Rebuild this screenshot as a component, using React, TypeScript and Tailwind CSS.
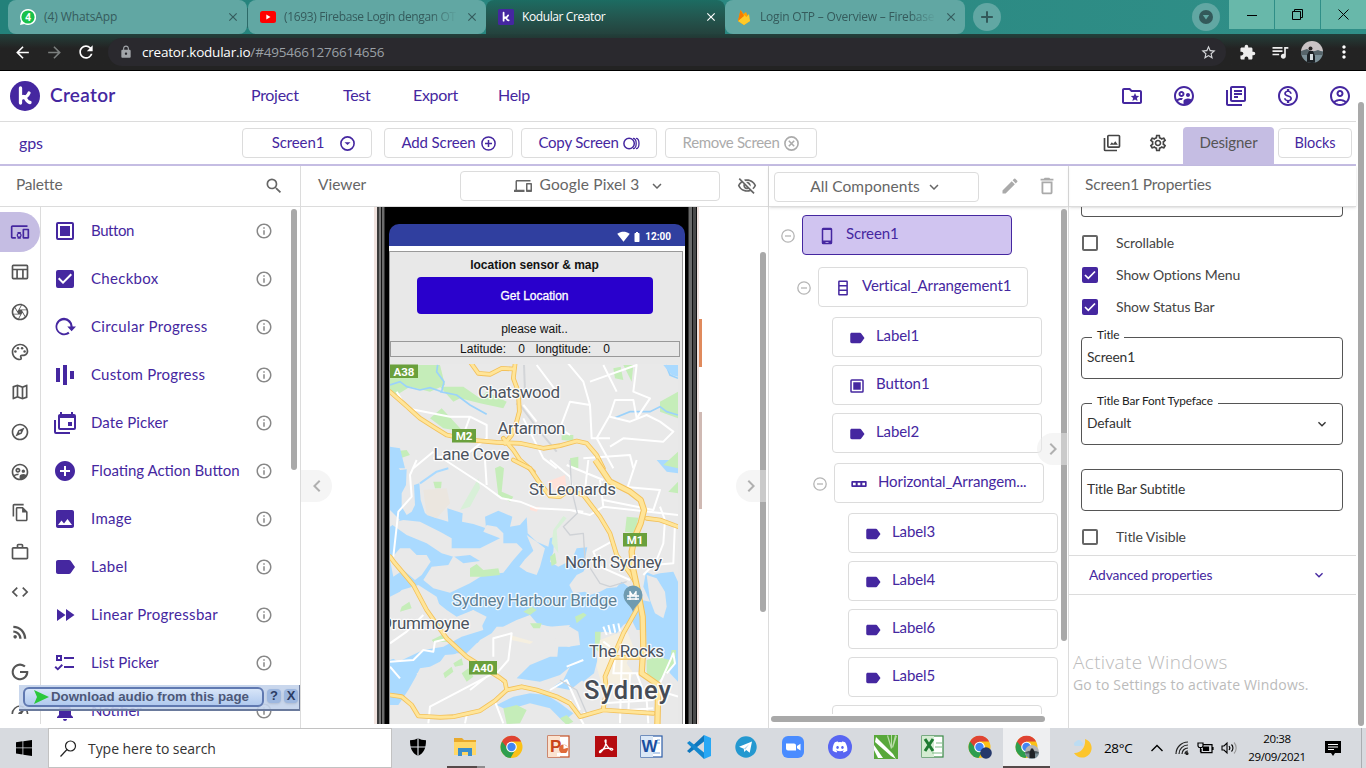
import React from "react";
import {
  MdAddCircle, MdArrowBack, MdArrowForward, MdCheckBox, MdChevronLeft, MdChevronRight, MdCode,
  MdDeleteOutline, MdEdit, MdExpandMore, MdExtension, MdFastForward, MdImage, MdLabel, MdLock, MdMoreVert,
  MdNotifications, MdOutlineAccountCircle, MdOutlineCamera, MdOutlineDevices, MdOutlineDevicesOther,
  MdOutlineExplore, MdOutlineFileCopy, MdOutlineFolderSpecial, MdOutlineInfo, MdOutlineLibraryBooks, MdOutlineMap,
  MdOutlineMonetizationOn, MdOutlinePalette, MdOutlineSettings, MdOutlineSupervisedUserCircle,
  MdOutlineVisibilityOff, MdQueueMusic, MdRefresh, MdRssFeed, MdSearch, MdSpeed, MdStarBorder, MdWorkOutline,
  MdClose, MdSignalWifi4Bar, MdBatteryFull,
} from "react-icons/md";
import { FaDiscord } from "react-icons/fa";

const JOST = "font-['Lato',sans-serif]";
const SEGOE = "font-['Open_Sans',sans-serif]";

function Svg({ w = 24, h, vb = "0 0 24 24", children, className = "" }: any) {
  return (
    <svg width={w} height={h ?? w} viewBox={vb} className={`shrink-0 ${className}`} fill="currentColor">
      {children}
    </svg>
  );
}

const ButtonIcon = ({ w }: any) => (
  <Svg w={w}><path fillRule="evenodd" d="M5 3h14a2 2 0 0 1 2 2v14a2 2 0 0 1-2 2H5a2 2 0 0 1-2-2V5a2 2 0 0 1 2-2zm0 2v14h14V5z" /><path d="M7 7h10v10H7z" /></Svg>
);
const CircularIcon = ({ w }: any) => (
  <Svg w={w}><path d="M11 2a9.500 9.500 0 1 0 6 17l-1.500-1.700A7.200 7.200 0 1 1 18 11.500h-3.500l4.700 5 4.800-5h-3.600A9.500 9.500 0 0 0 11 2z" /></Svg>
);
const CustomIcon = ({ w }: any) => (
  <Svg w={w}><path d="M3 5h4v14H3zM10 2h4v20h-4zM17 8h4v8h-4z" /></Svg>
);
const DateIcon = () => (
  <Svg w={24}><path fillRule="evenodd" d="M7 1h2v2h9V1h2v2h1a2 2 0 0 1 2 2v12a2 2 0 0 1-2 2H7a2 2 0 0 1-2-2V5c0-1.100.9-2 2-2zM7 7v10h14V7zM15 11h4v4h-4z" /><path d="M1 9h2v12h14v2H3a2 2 0 0 1-2-2z" /></Svg>
);
const ListPickIcon = () => (
  <Svg w={24}><path fillRule="evenodd" d="M3 4h6v6H3zm2 2v2h2V6zM11 6h10v2H11zM11 15h10v2H11zM8.600 13l1.400 1.400-5.200 5.200L1.500 16.500l1.400-1.400 1.900 1.800z" /></Svg>
);
const TableIcon = ({ w }: any) => (
  <Svg w={w}><path fillRule="evenodd" d="M4 3h16a2 2 0 0 1 2 2v14a2 2 0 0 1-2 2H4a2 2 0 0 1-2-2V5a2 2 0 0 1 2-2zm0 2v3h16V5zm0 5v9h3.500v-9zm5.500 0v9h5v-9zm7 0v9H20v-9z" /></Svg>
);
const PhoneIcon = () => (
  <Svg w={18}><path fillRule="evenodd" d="M7 1h10a2 2 0 0 1 2 2v18a2 2 0 0 1-2 2H7a2 2 0 0 1-2-2V3a2 2 0 0 1 2-2zm0 3v14h10V4zm3 16v1h4v-1z" /></Svg>
);
const VertIcon = () => (
  <Svg w={18}><path fillRule="evenodd" d="M7 2h10a1.500 1.500 0 0 1 1.500 1.500v17A1.500 1.500 0 0 1 17 22H7a1.500 1.500 0 0 1-1.500-1.500v-17A1.500 1.500 0 0 1 7 2zm.5 2v4h9V4zm0 6v4h9v-4zm0 6v4h9v-4z" /></Svg>
);
const HorizIcon = () => (
  <Svg w={16}><path fillRule="evenodd" d="M2 7.500h20a1.500 1.500 0 0 1 1.500 1.500v6a1.500 1.500 0 0 1-1.500 1.500H2A1.500 1.500 0 0 1 .5 15V9A1.500 1.500 0 0 1 2 7.500zm1 2.500v4h4v-4zm7 0v4h4v-4zm7 0v4h4v-4z" /></Svg>
);
const GalleryIcon = () => (
  <Svg w={20}><path fillRule="evenodd" d="M8 2h12a2 2 0 0 1 2 2v12a2 2 0 0 1-2 2H8a2 2 0 0 1-2-2V4a2 2 0 0 1 2-2zm0 2v12h12V4zM9.500 14l2.300-3 1.700 2 2.500-3 3 4z" /><path d="M2 6h2v14h14v2H4a2 2 0 0 1-2-2z" /></Svg>
);

function KLogo({ square = false, size }: any) {
  return (
    <svg width={size} height={size} viewBox="0 0 30 30" className="shrink-0">
      {square ? <rect width="30" height="30" rx="3" fill="#4527a0" /> : <circle cx="15" cy="15" r="15" fill="#4527a0" />}
      <path d="M10.500 7v15M12 17c4-.5 6-2.500 7-5M13.500 15.500c2.500.5 2.500 5.500 6.500 6" fill="none" stroke="#fff" strokeWidth="3.300" strokeLinecap="round" />
    </svg>
  );
}

function Tab({ icon, title, active, width, fade }: any) {
  return (
    <div className={`flex h-[34px] shrink-0 items-center pl-3 pr-[7px] ${width} ${active ? "rounded-t-lg bg-linear-to-b from-[#1c6c62] to-[#24423d] text-white" : "rounded-lg bg-[#61a7a3] text-[#355b5c]"}`}>
      {icon}
      <span className={`ml-2 flex-1 whitespace-nowrap text-[12px] ${fade ? "mask-r-from-85%" : ""}`}>{title}</span>
      <MdClose size={14} className="ml-2 shrink-0" />
    </div>
  );
}

function Browser() {
  return (
    <div className={`${SEGOE} shrink-0`}>
      <div className="flex h-[34px] bg-linear-to-r from-[#23817a] to-[#308f88] pl-2">
        <Tab width="w-[239px]" title={<span className="tracking-[-0.1px]">(4) WhatsApp</span>} icon={
          <svg width="16" height="16" viewBox="0 0 16 16" className="shrink-0"><path d="M8 0a8 8 0 1 1-3.700 15L0 16l1.100-4A8 8 0 0 1 8 0z" fill="#fff" /><circle cx="8" cy="8" r="6.600" fill="#19c14b" /><text x="8" y="11.500" fontSize="10" fontWeight="700" textAnchor="middle" fill="#fff">4</text></svg>} />
        <div className="mt-2 h-[20px] w-px bg-[#2c6a68]" />
        <Tab width="w-[238px]" fade title={<span className="tracking-[-0.35px]">(1693) Firebase Login dengan OT</span>} icon={
          <svg width="16" height="12" viewBox="0 0 16 12" className="shrink-0"><rect width="16" height="12" rx="2.500" fill="#f00" /><path d="M6.300 3.500v5L10.500 6z" fill="#fff" /></svg>} />
        <Tab width="w-[239px]" active title={<span className="tracking-[-0.4px]">Kodular Creator</span>} icon={<KLogo square size={16} />} />
        <Tab width="w-[240px]" fade title={<span className="ml-px tracking-[-0.2px]">Login OTP – Overview – Firebase</span>} icon={
          <svg width="14" height="16" viewBox="0 0 14 16" className="shrink-0"><path d="M1 12 3.500 1l3 4L9 3l4 9-6 4z" fill="#ffa000" /><path d="m1 12 6-6 2.500 2L12 5l1 7-6 4z" fill="#ffca28" /><path d="M1 12 3.500 1l3.500 6z" fill="#f57c00" /></svg>} />
        <div className="ml-[8px] mt-[3px] flex size-7 items-center justify-center rounded-full bg-[#61a7a3] text-[#33595a]">
          <Svg w={14}><path d="M10.300 2h3.400v8.300H22v3.400h-8.300V22h-3.400v-8.300H2v-3.400h8.300z" /></Svg>
        </div>
        <div className="ml-auto mr-[9px] mt-[3px] flex size-7 items-center justify-center rounded-full bg-[#61a7a3]">
          <svg width="14" height="14" viewBox="0 0 14 14"><circle cx="7" cy="7" r="7" fill="#33595a" /><path d="M3.800 5h6.400L7 9.500z" fill="#61a7a3" /></svg>
        </div>
        <div className="flex h-[29px] gap-px text-black">
          <div className="flex w-[45px] items-center justify-center bg-[#68b8aa]"><svg width="10" height="10"><path d="M0 5.500h10" stroke="#000" /></svg></div>
          <div className="flex w-[45px] items-center justify-center bg-[#68b8aa]"><svg width="11" height="11" fill="none" stroke="#000"><path d="M.5 2.500h8v8h-8zM2.500 2.500v-2h8v8h-2" /></svg></div>
          <div className="flex w-[45px] items-center justify-center bg-[#68b8aa]"><svg width="11" height="11" stroke="#000"><path d="m.5.5 10 10m0-10-10 10" /></svg></div>
        </div>
      </div>
      <div className="flex h-[37px] items-center border-b border-black bg-linear-to-b from-[#21403b] to-[#232323] to-40% text-white">
        <MdArrowBack size={19} className="ml-[13px]" />
        <MdArrowForward size={19} className="ml-[13px] text-[#7b7f7e]" />
        <MdRefresh size={20} className="ml-[12px]" />
        <div className="ml-[12px] flex h-7 w-[1118px] items-center rounded-full bg-[#2a292e] text-[13.500px]">
          <MdLock size={14} className="ml-[11px] text-[#a3a6aa]" />
          <span className="ml-[9px] tracking-[-0.22px]">creator.kodular.io<span className="tracking-[-0.18px] text-[#9aa0a6]">/#4954661276614656</span></span>
          <MdStarBorder size={17} className="ml-auto mr-[9px] text-[#d5d7da]" />
        </div>
        <MdExtension size={17} className="ml-[13px] text-[#eee]" />
        <MdQueueMusic size={20} className="ml-[14px] text-[#eee]" />
        <Avatar size={22} className="ml-[11px]" />
        <MdMoreVert size={20} className="ml-[11px]" />
      </div>
    </div>
  );
}

function Avatar({ size, className = "" }: any) {
  return (
    <svg width={size} height={size} viewBox="0 0 22 22" className={`shrink-0 rounded-full ${className}`}>
      <rect width="22" height="11" fill="#c9c2c4" />
      <rect y="10" width="22" height="12" fill="#7c9098" />
      <path d="M0 10l6-2 5 3 6-2 5 2v3H0z" fill="#56646a" />
      <circle cx="9.500" cy="7.500" r="2" fill="#241f20" /><path d="M6 22V14l2-4h4l2 5v7z" fill="#1d2226" /><path d="M9 13h3v6H9z" fill="#d6dde0" />
    </svg>
  );
}

const btn = "flex h-[30px] items-center justify-center rounded border border-[#dcdcdc]";

function Header() {
  return (
    <>
      <div className="flex h-[51px] shrink-0 items-center border-b border-[#dcdcdc] text-[#4527a0]">
        <div className="ml-[10px] flex w-[241px] items-center"><KLogo size={30} /><span className="ml-[10px] pb-[2px] text-[19px] font-semibold tracking-[0.3px]">Creator</span></div>
        <div className="flex items-center pb-[3px] text-[16px] tracking-[-0.3px]">
          <span className="w-[92px]">Project</span>
          <span className="w-[70px]">Test</span>
          <span className="w-[85px]">Export</span>
          <span>Help</span>
        </div>
        <div className="ml-auto mr-[4px] flex gap-[28px]">
          <MdOutlineFolderSpecial size={24} />
          <MdOutlineSupervisedUserCircle size={24} />
          <MdOutlineLibraryBooks size={24} />
          <MdOutlineMonetizationOn size={24} />
          <MdOutlineAccountCircle size={24} />
        </div>
      </div>
      <div className="flex h-[44px] shrink-0 items-center border-b-2 border-[#c5bde3] text-[15px] tracking-[-0.1px] text-[#4527a0]">
        <span className="ml-[19px] w-[223px] text-[16px]">gps</span>
        <div className={`${btn} w-[130px] pl-[13px]`}><span className="pb-[2px]">Screen1</span>
          <svg width="15" height="15" viewBox="0 0 15 15" className="ml-[16px]"><circle cx="7.500" cy="7.500" r="6.600" fill="none" stroke="currentColor" strokeWidth="1.600" /><path d="M4.500 6.300h6L7.500 9z" fill="currentColor" /></svg>
        </div>
        <div className={`${btn} ml-[12px] w-[129px] gap-[5px]`}><span className="pb-[2px]">Add Screen</span>
          <svg width="15" height="15" viewBox="0 0 15 15"><circle cx="7.500" cy="7.500" r="6.600" fill="none" stroke="currentColor" strokeWidth="1.500" /><path d="M7.500 4v7M4 7.500h7" stroke="currentColor" strokeWidth="1.500" /></svg>
        </div>
        <div className={`${btn} ml-[8px] w-[136px] gap-[4px]`}><span className="pb-[2px] tracking-[-0.2px]">Copy Screen</span>
          <svg width="17" height="13" viewBox="0 0 17 13" fill="none" stroke="currentColor" strokeWidth="1.500"><circle cx="6.100" cy="6.500" r="5.200" /><path d="M10 1.300c2 0 3.200 2.400 3.200 5.200S12 11.700 10 11.700M13 1.300c2 0 3 2.400 3 5.200s-1 5.200-3 5.200" strokeWidth="1.300" /></svg>
        </div>
        <div className={`${btn} ml-[8px] w-[152px] gap-[5px] text-[#ababab]`}><span className="pb-[2px] tracking-[-0.350px]">Remove Screen</span>
          <svg width="15" height="15" viewBox="0 0 15 15"><circle cx="7.500" cy="7.500" r="6.600" fill="none" stroke="currentColor" strokeWidth="1.600" /><path d="m4.800 4.800 5.400 5.400m0-5.400-5.400 5.400" stroke="currentColor" strokeWidth="1.600" /></svg>
        </div>
        <div className="ml-auto flex items-center pb-px text-[#444]"><GalleryIcon /><MdOutlineSettings size={20} className="ml-[26px]" /></div>
        <div className="ml-[15px] mt-[6px] flex h-[38px] w-[91px] items-center justify-center rounded-t bg-[#c5bde3] pb-[7px] text-[#555]">Designer</div>
        <div className={`${btn} ml-[4px] mr-[4px] w-[74px] text-[14.500px]`}>Blocks</div>
      </div>
    </>
  );
}

const palette: [any, string, string][] = [
  [<ButtonIcon w={24} />, "Button", "tracking-[-0.4px]"],
  [<MdCheckBox size={24} />, "Checkbox", "tracking-[0.3px]"],
  [<CircularIcon w={22} />, "Circular Progress", "tracking-[0.35px]"],
  [<CustomIcon w={24} />, "Custom Progress", "tracking-[0.200px]"],
  [<DateIcon />, "Date Picker", "tracking-[0.1px]"],
  [<MdAddCircle size={24} />, "Floating Action Button", ""],
  [<MdImage size={24} />, "Image", "tracking-[0.3px]"],
  [<MdLabel size={24} />, "Label", "tracking-[0.300px]"],
  [<MdFastForward size={24} />, "Linear Progressbar", "tracking-[0.300px]"],
  [<ListPickIcon />, "List Picker", "tracking-[0.05px]"],
  [<MdNotifications size={24} />, "Notifier", ""],
];

const GIcon = () => (
  <Svg w={20}><path d="M21.800 10.900H12v2.400h7.200c-.5 3.600-3.500 6.200-7.200 6.200a7.500 7.500 0 1 1 5-13.100l1.800-1.800A10 10 0 1 0 22 12c0-.4-.1-.8-.2-1.100z" /></Svg>
);

function PalettePanel() {
  const cats = [
    <TableIcon w={20} />, <MdOutlineCamera size={20} />, <MdOutlinePalette size={20} />, <MdOutlineMap size={20} />,
    <MdOutlineExplore size={20} />, <MdOutlineSupervisedUserCircle size={20} />, <MdOutlineFileCopy size={19} />,
    <MdWorkOutline size={20} />, <MdCode size={20} />, <MdRssFeed size={20} />, <GIcon />, <MdSpeed size={20} />,
  ];
  return (
    <div className="relative flex w-[301px] shrink-0 flex-col border-r border-[#dcdcdc]">
      <div className="flex h-[41px] shrink-0 items-center justify-between border-b border-[#dcdcdc] pl-4 pr-[16px] text-[15.500px] text-[#666]">
        <span className="pb-[3px] tracking-[-0.2px]">Palette</span><MdSearch size={20} />
      </div>
      <div className="flex h-[517px] overflow-hidden">
        <div className="w-[41px] shrink-0 border-r border-[#dcdcdc] text-[#555]">
          <div className="h-[507px] overflow-hidden pt-[5px]">
            <div className="flex h-10 w-10 items-center justify-center rounded-r-full bg-[#c5bde3] text-[#4527a0]"><MdOutlineDevicesOther size={20} /></div>
            {cats.map((c, i) => <div key={i} className="flex h-10 items-center justify-center">{c}</div>)}
          </div>
        </div>
        <div className="flex-1">
          {palette.map(([ic, name, track]) => (
            <div key={name} className="flex h-12 items-center pl-3 text-[15px] text-[#4527a0]">
              <div className="flex w-6 justify-center">{ic}</div>
              <span className={`ml-[14px] flex-1 whitespace-nowrap pb-[2px] ${track}`}>{name}</span>
              <MdOutlineInfo size={18} className="mr-[18px] text-[#888]" />
            </div>
          ))}
        </div>
        <div className="mr-[3px] mt-[2px] h-[261px] w-[6px] rounded-full bg-[#a9a9a9]" />
      </div>
      <div className="absolute left-[19px] top-[519px] flex h-[26px] w-[281px] items-center gap-[3px] border-b-2 border-r border-[#6a7a9c] bg-[#c3d3eb]/90 pl-[4px] font-['Liberation_Sans',sans-serif] text-[13.300px] font-bold text-[#4c5a86]">
        <div className="flex h-[20px] w-[241px] items-center rounded-[6px] border-2 border-[#6079b1] bg-linear-to-b from-[#d7e5f8] to-[#b0c9ee] pl-[9px] whitespace-nowrap">
          <svg width="15" height="14" viewBox="0 0 15 14"><path d="M0 0l15 7-15 7 3-7z" fill="#2bc83d" /></svg>
          <span className="ml-[2px] text-[#4d5878]">Download audio from this page</span>
        </div>
        <div className="mb-[3px] flex size-[14px] items-center justify-center rounded bg-[#9db7df] text-[13px] text-[#2b3c63] shadow-sm">?</div>
        <div className="mb-[3px] flex size-[14px] items-center justify-center rounded bg-[#9db7df] text-[13px] text-[#2b3c63] shadow-sm">X</div>
      </div>
    </div>
  );
}

const upper = "translate(370 205) scale(.33333)";
const lower = "translate(370 460) scale(.33333)";

const roadsUpper = [
  "M60 560L100 595 150 640 190 665 230 690 300 705 380 712 450 715 520 730 570 722 620 708 650 715 680 750 700 790",
  "M300 470L325 505 360 508 395 490 430 492 M436 470L430 520 445 560 448 620 440 650 425 690 405 715 M400 700L430 735 450 765 490 800",
];
const roadsLower = [
  "M430 0L480 25 510 70 540 108 570 110 590 95",
  "M590 90L640 105 690 170 720 220 740 285 780 340 795 365 M830 175L870 180 924 200",
  "M60 290L75 310 130 375 170 450 230 535 290 590 385 650 405 665 410 690 M410 690L455 680 500 690 560 710 600 730 630 770 700 750 850 760",
  "M60 705L95 710 125 735 145 768 210 772 250 770 330 752 375 722 410 690",
  "M805 440L760 520 730 590 705 650 710 690 700 745 M735 592L820 592",
];
const motorway = "M676 0L720 65 780 95 812 120 822 150 812 190 795 230 785 275 790 330 805 400 818 470 820 560 815 640 865 675 862 800";

function Roads({ list }: { list: string[] }) {
  return (
    <g fill="none" strokeLinejoin="round" strokeLinecap="round">
      {list.map((d) => <path key={d} d={d} stroke="#f3c15a" strokeWidth="14" />)}
      {list.map((d) => <path key={d} d={d} stroke="#ffe599" strokeWidth="9" />)}
    </g>
  );
}

function Place({ x, y, s = 17, c = "#4d545e", w, children }: any) {
  return <text x={x} y={y} fontSize={s} fill={c} textLength={w} stroke="#fff" strokeWidth="2.500" strokeOpacity=".85" strokeLinejoin="round" paintOrder="stroke">{children}</text>;
}
function Shield({ x, y, w, children }: any) {
  return (
    <g><rect x={x} y={y} width={w} height="13.500" fill="#6aa03c" /><text x={x + w / 2} y={y + 11} fontSize="11.500" fontWeight="700" textAnchor="middle" fill="#fff">{children}</text></g>
  );
}

function CityMap() {
  return (
    <svg width="288" height="360" viewBox="390 364 288 360" className="block overflow-hidden font-['Roboto',sans-serif]">
      <rect x="390" y="364" width="288" height="360" fill="#e9e9e9" />
      <g transform={lower}>
        <g fill="#aadaff">
          <path d="M60 0L75 5 90 30 110 28 108 75 95 100 95 140 110 165 125 155 135 135 132 75 148 70 152 120 165 160 200 175 235 185 232 145 278 160 276 185 310 192 348 205 345 170 385 152 427 170 420 200 450 195 470 172 473 220 500 245 535 260 540 235 553 230 550 275 540 305 565 320 605 300 620 265 652 262 645 295 656 305 640 335 620 345 598 375 610 400 645 395 660 405 690 395 710 385 740 382 755 365 800 400 815 420 840 425 820 380 828 335 850 345 870 340 910 335 924 365 924 665 900 640 880 590 845 590 830 570 828 510 800 510 785 480 760 495 740 520 700 515 678 520 675 560 682 600 672 640 640 665 615 640 600 620 570 645 510 665 440 655 480 615 540 590 562 590 565 560 600 560 615 530 600 500 560 515 545 500 505 495 480 465 440 480 400 500 380 500 365 520 330 540 300 580 260 580 220 600 180 620 150 625 135 655 115 690 85 735 60 735 60 600 140 570 180 540 240 525 290 515 335 500 350 470 310 450 260 470 230 450 180 410 150 390 100 390 60 410 60 200 90 180 60 150Z" />
          <path d="M380 735L430 710 480 700 530 705 570 730 610 760 580 785 540 745 480 730 430 745 400 745ZM860 0L924 0 924 40 890 35Z M550 680L580 660 600 620 640 610 650 650 600 690Z" />
        </g>
        <g fill="#e9e9e9">
          <path d="M60 190L100 180 150 185 210 215 245 235 245 265 330 265 390 235 340 215 350 195 380 200 400 220 400 250 440 250 458 268 430 300 400 338 340 345 300 370 240 398 190 385 160 360 185 320 235 315 250 288 280 310 330 303 300 285 250 290 215 280 170 250 110 225Z" />
          <path d="M90 265L120 265 140 285 170 285 182 305 155 345 135 360 100 330 70 350 60 300Z" />
          <path d="M470 225L500 245 525 265 510 320 500 345 470 335 448 320 465 298 490 272Z" />
          <path d="M840 420L830 345 860 355 885 395 890 440 880 475 855 460Z" />
          <path d="M60 430L95 390 145 375 200 410 215 455 260 478 310 450 330 470 340 510 275 530 220 560 160 570 85 605 60 590Z" />
          <path d="M480 470L500 490 540 500 600 495 580 535 555 550 530 580 500 590 440 650 380 660 280 640 200 650 150 670 140 640 200 620 225 585 290 580 320 550 370 530 400 500Z" />
          <path d="M550 540L600 500 625 515 630 555 595 560Z" />
        </g>
        <g fill="#c5edb9">
          <path d="M375 25L390 18 402 25 395 95 430 110 420 125 385 105ZM190 65L215 65 213 85 195 85ZM770 170L805 173 795 220 765 215ZM300 325L320 312 340 330 385 325 390 345 340 350 300 350ZM540 290L555 278 560 310 545 318Z" />
          <path d="M830 600L860 590 900 600 905 570 918 570 915 610 860 670 830 640ZM675 515L692 515 690 580 675 565ZM480 490L515 490 510 505 490 505ZM615 470L640 458 650 465 620 490ZM460 455L485 440 500 450 480 465ZM400 745L440 735 470 750 450 790 410 792ZM570 775L590 765 610 785 590 795ZM250 610L275 595 280 615 255 620ZM185 540L215 525 240 545 190 545ZM95 440L118 425 125 445 90 455ZM895 95L924 65 924 100ZM220 640L245 620 250 635 225 655ZM275 640L295 625 310 650 290 665Z" />
        </g>
        <path d="M530 65L585 45 590 85 560 95ZM480 140L510 140 500 155 480 150Z" fill="#ffe1d9" />
        <path d="M690 540L770 510 790 560 770 610 790 640 770 680 730 670 700 690 680 620ZM420 525L490 545 480 552 425 540Z" fill="#f5efe0" />
        <path d="M160 90L230 85 240 130 200 175 170 165Z" fill="#ebe6df" />
        <path d="M270 150L325 55 330 85 300 140ZM545 250L550 210 580 168 590 175 560 210 565 280Z" fill="#d8f0d8" />
      </g>
      <g transform={upper}>
        <path d="M60 480L210 480 225 540 180 560 120 545 80 570 60 560ZM210 545L280 545 330 580 350 560 410 590 400 610 330 595 270 580 250 590ZM730 490L752 485 760 525 735 520ZM870 590L924 560 924 640 870 620ZM575 690L610 690 610 708 575 705ZM180 640L215 610 280 680 220 670ZM600 760L625 755 625 790 600 785ZM60 740L110 735 120 750 60 770ZM880 780L924 740 924 790ZM760 480L790 480 785 530Z" fill="#c5edb9" />
        <path d="M60 540L90 530 110 545 150 555 180 548 215 560 222 530 200 500 203 480M888 480L900 510 924 520M735 638L780 620 840 620 870 605 890 620 924 630M210 560L260 570 300 600 350 628" fill="none" stroke="#9bd2fb" strokeWidth="5" />
        <path d="M880 480L924 480 924 515 905 510ZM60 725L90 730 105 790 60 790Z" fill="#aadaff" />
      </g>
      <g transform={upper} fill="none" stroke="#fff" strokeWidth="6" strokeLinejoin="round">
        <path d="M80 560L110 610 240 635 300 635 350 660 350 710M300 635L280 690M590 470L640 530 660 600 600 590 570 670 600 690M500 480L560 560M660 530L800 480 790 560 840 580 800 640 790 585 735 585 720 630 680 700 730 790M660 600L665 700 720 700M460 600L500 650M720 635L780 650 830 630 870 650 910 680 880 710 760 700 720 725" />
        <path d="M350 700L300 740 190 760M130 790L190 740M700 480L740 560M460 640L520 760 560 790M640 760L780 750 790 790" />
        <path d="M462 480L465 560 440 600M450 600L510 680 560 740" stroke="#d3d5d8" />
      </g>
      <g transform={lower} fill="none" stroke="#fff" strokeWidth="6" strokeLinejoin="round">
        <path d="M140 0L120 45 125 110 85 155 70 290M225 0L340 75 395 115 450 125 500 145 600 150 660 165 700 140 924 165M540 0L600 50 610 100M590 15L700 60M655 0L645 90M700 120L850 150 870 90 760 80M700 140L690 60M800 0L770 90M600 150L640 155M345 0L350 75" />
        <path d="M870 140L885 180 880 250 860 300M725 245L670 275 690 320 780 360M820 345L850 315 910 310 915 190M60 550L110 515 160 465M60 605L130 600 160 570 190 575 195 545 240 535M60 620L90 655M370 590L370 535 425 520 415 600 380 640M395 665L370 640 180 740 175 790M350 650L300 690M375 725L400 790M540 690L590 660 630 750M590 620L640 600M600 720L645 800M735 595L730 640 830 640M755 600L750 790M780 640L775 760M700 730L850 720M640 760L850 745M800 640L830 720 835 790M720 560L700 545M700 500L710 525M715 495L722 522M730 492L736 518M745 490L750 514M870 670L910 580 915 610 890 640M860 690L924 710M285 790L290 765" />
        <path d="M600 0L605 90 622 160 580 200 600 225 640 220 645 300 690 370 720 380 770 365M570 660L620 690 650 760" stroke="#cfd2d6" strokeWidth="4" />
        <path d="M235 25L200 35 150 70" stroke="#aadaff" />
      </g>
      <g transform={upper}><Roads list={roadsUpper} /></g>
      <g transform={lower}>
        <Roads list={roadsLower} />
        <g fill="none" strokeLinejoin="round"><path d={motorway} stroke="#f3c15a" strokeWidth="19" /><path d={motorway} stroke="#ffe599" strokeWidth="13" /></g>
      </g>
      <Place x={478} y={398} w={82}>Chatswood</Place>
      <Place x={497.500} y={433.500} w={68}>Artarmon</Place>
      <Place x={433.500} y={460} w={76}>Lane Cove</Place>
      <Place x={529} y={494.500} w={87}>St Leonards</Place>
      <Place x={565} y={568} w={97}>North Sydney</Place>
      <Place x={452} y={606} w={165} c="#5f8196">Sydney Harbour Bridge</Place>
      <Place x={381} y={629} w={88.500}>Drummoyne</Place>
      <Place x={589} y={656.500} w={75}>The Rocks</Place>
      <text x={584} y={699} fontSize="25.500" fontWeight="500" textLength={87} fill="#454b55" stroke="#fff" strokeWidth="3" strokeOpacity=".85" strokeLinejoin="round" paintOrder="stroke">Sydney</text>
      <Shield x={390} y={364.500} w={28}>A38</Shield>
      <Shield x={452} y={429} w={24}>M2</Shield>
      <Shield x={623} y={533} w={24}>M1</Shield>
      <Shield x={469} y={661} w={28}>A40</Shield>
      <path d="M633 612c-1-6-9.500-9-9.500-17a9.500 9.500 0 1 1 19 0c0 8-8.500 11-9.500 17z" fill="#6f9bb0" />
      <path d="M627 599h12M627 596h12M630 591v9M636 591v9M630 592l3 4 3-4" stroke="#fff" strokeWidth="1.300" fill="none" />
    </svg>
  );
}

function Handle({ className, children }: any) {
  return <div className={`absolute flex h-8 items-center justify-center bg-[#ebebeb]/50 text-[#b0b0b0] ${className}`}>{children}</div>;
}

function Viewer() {
  return (
    <div className="relative flex w-[468px] shrink-0 flex-col border-r border-[#dcdcdc]">
      <div className="flex h-[41px] shrink-0 items-center border-b border-[#dcdcdc] text-[15.500px] text-[#666]">
        <span className="ml-[17px] w-[142px] pb-[3px]">Viewer</span>
        <div className={`${btn} w-[260px]`}>
          <MdOutlineDevices size={18} /><span className="ml-[8px] pb-[2px] tracking-[0.15px]">Google Pixel 3</span><MdExpandMore size={18} className="ml-[9px]" />
        </div>
        <MdOutlineVisibilityOff size={20} className="ml-[17px]" />
      </div>
      <div className="flex h-[517px] pl-[73px]">
        <div className="w-[3px] bg-[#f0e2de]" />
        <div className="w-[2px] bg-[#3a3a3a]" />
        <div className="w-[2px] bg-[#777]" />
        <div className="w-px bg-[#111]" />
        <div className="w-[2px] bg-[#6b6b6b]" />
        <div className="w-px bg-[#333]" />
        <div className="w-[4px] bg-black" />
        <div className="flex w-[296px] flex-col bg-black pt-[17px]">
          <div className="flex h-[22px] shrink-0 items-center justify-end rounded-t-[10px] bg-[#303f9f] pr-[14px] pt-[3px] font-['Roboto',sans-serif] text-[10px] font-bold text-white">
            <MdSignalWifi4Bar size={13} /><MdBatteryFull size={12} className="ml-[1px] mr-[2px]" />12:00
          </div>
          <div className="flex-1 overflow-hidden bg-white pr-[2px] pt-[5px] font-['Liberation_Sans',sans-serif] text-[12px] text-[#111]">
            <div className="flex h-[480px] flex-col items-center border border-[#999] bg-[#e8e8e8] pr-[3px]">
              <div className="flex h-[25px] items-center text-[12px] font-bold">location sensor &amp; map</div>
              <div className="flex h-[37px] w-[236px] shrink-0 items-center justify-center rounded bg-[#2900cc] text-[12px] font-medium text-white [-webkit-text-stroke:0.3px_white]">Get Location</div>
              <div className="flex h-[27px] shrink-0 items-center pt-[2px]">please wait..</div>
              <div className="flex h-[16px] w-[290px] shrink-0 items-center justify-center self-start border border-[#999]">
                <span>Latitude:</span><span className="ml-[12px]">0</span><span className="ml-[11px]">longtitude:</span><span className="ml-[12px]">0</span>
              </div>
              <div className="mt-[7px] self-start"><CityMap /></div>
            </div>
          </div>
        </div>
        <div className="w-[3px] bg-black" />
        <div className="w-px bg-[#333]" />
        <div className="w-[3px] bg-[#6b6b6b]" />
        <div className="w-px bg-[#111]" />
        <div className="w-[3px] bg-[#4a4a4a]" />
        <div className="w-px bg-[#111]" />
        <div className="w-[2px] bg-[#f0e2de]" />
        <div className="w-[3px] pt-[112px]"><div className="h-[48px] bg-[#e08a5c]" /><div className="mt-[45px] h-[97px] bg-[#cfb9b3]" /></div>
        <div className="ml-[58px] mt-[45px] h-[360px] w-[6px] rounded-full bg-[#a9a9a9]" />
      </div>
      <Handle className="left-0 top-[304px] w-[31px] rounded-r-full"><MdChevronLeft size={24} /></Handle>
      <Handle className="right-[2px] top-[304px] w-[30px] rounded-l-full"><MdChevronRight size={24} /></Handle>
    </div>
  );
}

const tree: [string, any, string, boolean?][] = [
  ["ml-[12px] mt-[8px]", <PhoneIcon />, "Screen1", true],
  ["ml-[28px] mt-[12px]", <VertIcon />, "Vertical_Arrangement1", true],
  ["ml-[63px] mt-[10px]", <MdLabel size={18} />, "Label1"],
  ["ml-[63px] mt-[8px]", <ButtonIcon w={18} />, "Button1"],
  ["ml-[63px] mt-[8px]", <MdLabel size={18} />, "Label2"],
  ["ml-[44px] mt-[10px]", <HorizIcon />, "Horizontal_Arrangem...", true],
  ["ml-[79px] mt-[10px]", <MdLabel size={18} />, "Label3"],
  ["ml-[79px] mt-[8px]", <MdLabel size={18} />, "Label4"],
  ["ml-[79px] mt-[8px]", <MdLabel size={18} />, "Label6"],
  ["ml-[79px] mt-[8px]", <MdLabel size={18} />, "Label5"],
  ["ml-[63px] mt-[8px]", null, ""],
];

function Components() {
  return (
    <div className="relative flex w-[300px] shrink-0 flex-col border-r border-[#dcdcdc]">
      <div className="flex h-[41px] shrink-0 items-center border-b border-[#dcdcdc] pl-[5px] text-[15.500px] text-[#666] shadow-sm">
        <div className={`${btn} mt-[2px] w-[205px]`}><span className="tracking-[0.08px]">All Components</span><MdExpandMore size={18} className="ml-[5px]" /></div>
        <MdEdit size={20} className="ml-[21px] text-[#aaa]" /><MdDeleteOutline size={22} className="ml-[16px] text-[#aaa]" />
      </div>
      <div className="flex h-[507px] overflow-hidden">
        <div className="w-[292px] shrink-0">
          {tree.map(([cls, icon, name, node], i) => (
            <div key={i} className={`flex h-10 items-center ${cls}`}>
              {node && <svg width="14" height="14" viewBox="0 0 14 14" className="mr-[7px] mt-px shrink-0" fill="none" stroke="#b5b5b5" strokeWidth="1.300"><circle cx="7" cy="7" r="6.200" /><path d="M4 7h6" /></svg>}
              <div className={`flex h-10 w-[210px] shrink-0 items-center rounded border text-[15px] text-[#4527a0] ${i === 0 ? "border-[#4527a0] bg-[#d0c4f0]" : "border-[#dcdcdc] bg-white"}`}>
                <div className="ml-[15px] mt-[2px] flex w-[18px] justify-center">{icon}</div>
                <span className="ml-[10px] pb-[3px] tracking-[-0.1px]">{name}</span>
              </div>
            </div>
          ))}
        </div>
        <div className="mt-[2px] h-[432px] w-[6px] shrink-0 rounded-full bg-[#a9a9a9]" />
      </div>
      <div className="ml-[2px] mt-[2px] h-[6px] w-[274px] rounded-full bg-[#a9a9a9]" />
      <Handle className="right-0 top-[267px] w-[31px] rounded-l-full"><MdChevronRight size={24} /></Handle>
    </div>
  );
}

function Check({ on, label }: any) {
  return (
    <div className="flex h-8 items-center text-[14px] text-[#444]">
      {on
        ? <div className="flex size-4 items-center justify-center rounded-xs bg-[#4527a0]"><svg width="12" height="10" fill="none" stroke="#fff" strokeWidth="1.700"><path d="M1 5l3.300 3.300L11 1.500" /></svg></div>
        : <div className="size-4 rounded-xs border-2 border-[#666]" />}
      <span className="ml-[18px] pb-px tracking-[-0.1px]">{label}</span>
    </div>
  );
}
function Field({ label, value, select, className = "" }: any) {
  return (
    <div className={`relative -ml-px flex h-[42px] w-[262px] shrink-0 items-center justify-between rounded border border-[#555] pl-[5px] pr-[12px] text-[13.800px] text-[#333] ${className}`}>
      {label && <span className="absolute -top-[10px] left-[10px] bg-white px-[5px] text-[11.800px] leading-[14px] tracking-[-0.15px] text-[#222]">{label}</span>}
      <span className="pb-px tracking-[-0.15px]">{value}</span>{select && <MdExpandMore size={16} />}
    </div>
  );
}

function Properties() {
  return (
    <div className="flex w-[287px] shrink-0 flex-col">
      <div className="flex h-[41px] shrink-0 items-center border-b border-[#dcdcdc] pb-[3px] pl-4 text-[15.500px] tracking-[-0.15px] text-[#666] shadow-sm">Screen1 Properties</div>
      <div className="flex flex-col pl-[13px]">
        <div className="-ml-px h-[10px] w-[262px] rounded-b border border-t-0 border-[#555]" />
        <div className="mt-[10px] flex flex-col"><Check label="Scrollable" /><Check on label="Show Options Menu" /><Check on label="Show Status Bar" /></div>
        <Field label="Title" value="Screen1" className="mt-[14px]" />
        <Field label="Title Bar Font Typeface" value="Default" select className="mt-[24px]" />
        <Field value="Title Bar Subtitle" className="mt-[24px]" />
        <div className="mt-[10px]"><Check label="Title Visible" /></div>
      </div>
      <div className="mt-[2px] flex h-[40px] shrink-0 items-center justify-between border-y border-[#dcdcdc] pl-5 pr-[29px] text-[13.800px] tracking-[-0.1px] text-[#4527a0]">Advanced properties<MdExpandMore size={16} /></div>
      <div className={`${SEGOE} mt-[54px] pl-1 text-[#bbb]`}>
        <div className="text-[19px] font-light leading-[26px] tracking-[0.35px]">Activate Windows</div>
        <div className="text-[14px] leading-[20px] tracking-[0.18px]">Go to Settings to activate Windows.</div>
      </div>
    </div>
  );
}

function Chrome({ badge }: any) {
  return (
    <svg width="24" height="24" viewBox="0 0 24 24">
      <circle cx="11.500" cy="12" r="11" fill="#fbc116" />
      <path d="M11.500 12L2 6.500A11 11 0 0 0 10.500 23l5-8.500z" fill="#2e9e4f" />
      <path d="M11.500 12H6.500L2 6.500a11 11 0 0 1 19.200 0H11.500z" fill="#df4333" />
      <circle cx="11.500" cy="12" r="5.300" fill="#fff" /><circle cx="11.500" cy="12" r="4.200" fill="#4285f4" />
      {badge === 1 && <circle cx="18" cy="18" r="5.800" fill="#25386b" />}
      {badge === 2 && <g><circle cx="17" cy="17" r="7" fill="#b3b4b6" /><path d="M10 17h14a7 7 0 0 1-14 0z" fill="#7b8f97" /><path d="M10.500 17c4-2 8-2 13 0v1.500h-13z" fill="#4e5b60" /><path d="M14.500 23v-5l1.500-4.500h2l2 4.500v5z" fill="#202326" /></g>}
    </svg>
  );
}

function Taskbar() {
  const apps = [
    <svg width="18" height="18" viewBox="0 0 18 18"><path d="M9 0c2 1.500 5 2.200 8 2.200C17 10 15 15 9 18 3 15 1 10 1 2.200 4 2.200 7 1.500 9 0z" fill="#000" /><path d="M9 0v18M1 9h16" stroke="#d6dadf" strokeWidth="1.200" /></svg>,
    <svg width="22" height="20" viewBox="0 0 22 20"><path d="M0 1h8l2 2h12v15H0z" fill="#e8a92c" /><path d="M0 5h22v13H0z" fill="#ffd765" /><path d="M4 19v-8h14v8h-4v-4H8v4z" fill="#3b8ecb" /></svg>,
    <Chrome />,
    <svg width="24" height="24" viewBox="0 0 24 24"><rect x="1" y="1" width="21" height="21" fill="#fff" stroke="#c65125" strokeWidth="1.200" /><path d="M1 1h12v21H1z" fill="#fbe3d0" /><circle cx="16.500" cy="14" r="4.500" fill="#e06b3a" /><path d="M16.500 14V9l5 3.500zM10 18h11v3H10z" fill="#fff" /><text x="3" y="16.500" fontSize="17" fontWeight="700" fill="#c9431a" className="font-['Liberation_Sans']">P</text></svg>,
    <svg width="22" height="22" viewBox="0 0 22 22"><rect width="22" height="21" fill="#b50b0f" /><path d="M11 4c.5 4-2 9-5.500 12.500-1 .5-1.500-.5-.5-1.500 3-2.500 9-3.500 12-2.500 1.500.8.5 2-1 1.300C13.500 12.500 10.500 8.500 10 5c0-1 .8-1.500 1-1z" fill="none" stroke="#fff" strokeWidth="1.300" /></svg>,
    <svg width="24" height="24" viewBox="0 0 24 24"><rect x="1" y="1" width="21" height="21" fill="#fff" stroke="#2d5ea8" strokeWidth="1.200" /><path d="M1 1h12v21H1z" fill="#dbe8f7" /><path d="M13 18h7M17 5h3M17 8h3" stroke="#7ca3d8" /><text x="1.500" y="17" fontSize="17" fontWeight="700" fill="#1c4fa0" className="font-['Liberation_Sans']">W</text></svg>,
    <svg width="24" height="24" viewBox="0 0 24 24"><path d="M17 0v6.500L2.500 18 0 16z" fill="#0f77bd" /><path d="M17 24v-6.500L2.500 6 0 8z" fill="#1488cf" /><path d="M17 0l7 3v18l-7 3z" fill="#28a8f5" /></svg>,
    <svg width="22" height="22" viewBox="0 0 22 22"><circle cx="11" cy="11" r="10.700" fill="#2498d0" /><path d="M4 10.800L17 5.500l-2.300 11.200-3.500-2.600-2 1.900-.4-3.200z" fill="#fff" /><path d="M9 12.800l5.300-4.700-4 5.300z" fill="#a9d3ea" /></svg>,
    <svg width="22" height="22" viewBox="0 0 22 22"><rect width="22" height="22" rx="6" fill="#4a8cff" /><path d="M4 7.500h8a2 2 0 0 1 2 2v5H6a2 2 0 0 1-2-2zM15 10l3.500-2.300v6.800L15 12.200z" fill="#fff" /></svg>,
    <div className="flex size-6 items-center justify-center rounded-full bg-[#5865f2] text-white"><FaDiscord size={16} /></div>,
    <svg width="24" height="24" viewBox="0 0 24 24"><rect width="24" height="24" fill="#58a83b" /><path d="M2 2l17 17 3 5-5-3L1 7zM0 10l9 13H4L0 15z" fill="#fff" /><path d="M13 1l4 13 1-1L14 0zM17 0v13h1V0zM23 1l-4 12-1-1 3-12z" fill="#b9dba9" /></svg>,
    <svg width="24" height="24" viewBox="0 0 24 24"><rect x="1" y="1" width="21" height="21" fill="#fff" stroke="#3a8b46" strokeWidth="1.200" /><path d="M1 1h12v21H1z" fill="#d4ecd2" /><path d="M4 4l8 12M12 4L4 16" stroke="#1e7b32" strokeWidth="3" /><path d="M15 8h6M14 12h7M11 18h10" stroke="#7dbb85" /></svg>,
    <Chrome badge={1} />,
    <Chrome badge={2} />,
  ];
  return (
    <div className={`${SEGOE} flex h-[40px] shrink-0 bg-[#d7dadf] text-black`}>
      <div className="flex w-12 items-center justify-center"><svg width="16" height="16" viewBox="0 0 16 16"><path d="M0 2.300l6.500-1v6.200H0zM7.300 1.200L16 0v7.500H7.300zM0 8.300h6.500v6.200L0 13.600zM7.300 8.300H16V16l-8.700-1.300z" /></svg></div>
      <div className="flex w-[344px] items-center border border-[#c2c2c2] bg-white text-[14px] text-[#333]">
        <svg width="17" height="17" viewBox="0 0 17 17" className="ml-[11px]" fill="none" stroke="#222" strokeWidth="1.200"><circle cx="10.500" cy="6" r="5" /><path d="M7 9.500L.5 16.500" /></svg>
        <span className="ml-[11px] tracking-[-0.05px]">Type here to search</span>
      </div>
      <div className="ml-[3px] flex">
        {apps.map((a, i) => (
          <div key={i} className={`flex w-[46.800px] items-center justify-center border-b-2 ${i === 13 ? "border-[#554a4a] bg-[#eeeff1]" : i === 1 ? "border-transparent" : "border-transparent"} ${i === 1 ? "relative" : ""}`}>
            {a}
            {i === 1 && <span className="absolute -bottom-[2px] left-[5px] h-[2px] w-[38px] bg-linear-to-r from-[#554a4a] from-80% to-[#8e8c8e] to-80%" />}
          </div>
        ))}
      </div>
      <div className="ml-auto flex items-center">
        <svg width="22" height="22" viewBox="0 0 22 22"><path d="M12 2a9.500 9.500 0 1 1-11 14C8 16.500 13 10 12 2z" fill="#fcc52c" /><path d="M2 9a2.500 2.500 0 0 1 1-4.500 3 3 0 0 1 5.500.5 2.200 2.200 0 0 1 .5 4z" fill="#bcdcf2" /></svg>
        <span className="ml-[9px] w-[32px] text-[13.500px] tracking-[-0.35px]">28°C</span>
        <svg width="12" height="8" className="ml-[15px]" fill="none" stroke="#000" strokeWidth="1.400"><path d="M.5 7L6 1.500 11.500 7" /></svg>
        <svg width="14" height="14" viewBox="0 0 14 14" className="ml-[12px]" fill="none" stroke="#222" strokeWidth="1.200"><path d="M1 13A12 12 0 0 1 13 1M4 13a9 9 0 0 1 9-9M7 13a6 6 0 0 1 6-6M10 13a3 3 0 0 1 3-3" /><circle cx="12" cy="12.500" r="1" fill="#000" /></svg>
        <svg width="17" height="12" viewBox="0 0 17 12" className="ml-[8px]" fill="none" stroke="#000" strokeWidth="1.200"><path d="M6 2.600h9v8H4V7M16 5v3" /><path d="M1 1h5v3l-1 1.500H2L1 4zM3.500 5.500V10" /><path d="M6.500 5h5v3.500h-5z" fill="#000" /></svg>
        <svg width="17" height="14" viewBox="0 0 17 14" className="ml-[7px]" fill="none" stroke="#000" strokeWidth="1.100"><path d="M1 5h2l3-3v10L3 9H1z" /><path d="M8 5a3 3 0 0 1 0 4M10.500 3.500a5 5 0 0 1 0 7" /><path d="M13 1.500a8 8 0 0 1 0 11" stroke="#999" /></svg>
        <div className="ml-[9px] w-[60px] text-center text-[11.500px] leading-[18px] tracking-[-0.35px] whitespace-nowrap">20:38<br />29/09/2021</div>
        <svg width="16" height="17" viewBox="0 0 16 17" className="ml-[18px] mr-[20px]"><path d="M0 1h16v12h-6l-2 3-2-3H0z" /><path d="M3 4.500h10M3 7h10M3 9.500h6" stroke="#fff" strokeWidth="1.100" /></svg>
        <div className="mr-[4px] h-10 w-px bg-[#aaadb1]" />
      </div>
    </div>
  );
}

export default function App() {
  return (
    <div className="flex h-[768px] w-[1366px] flex-col overflow-hidden bg-white">
      <Browser />
      <div className={`${JOST} flex h-[657px] shrink-0`}>
        <div className="flex w-[1356px] flex-col">
          <Header />
          <div className="flex flex-1">
            <PalettePanel />
            <Viewer />
            <Components />
            <Properties />
          </div>
        </div>
        <div className="ml-[2px] mt-[31px] h-[624px] w-[6px] rounded-full bg-[#a9a9a9]" />
      </div>
      <Taskbar />
    </div>
  );
}
